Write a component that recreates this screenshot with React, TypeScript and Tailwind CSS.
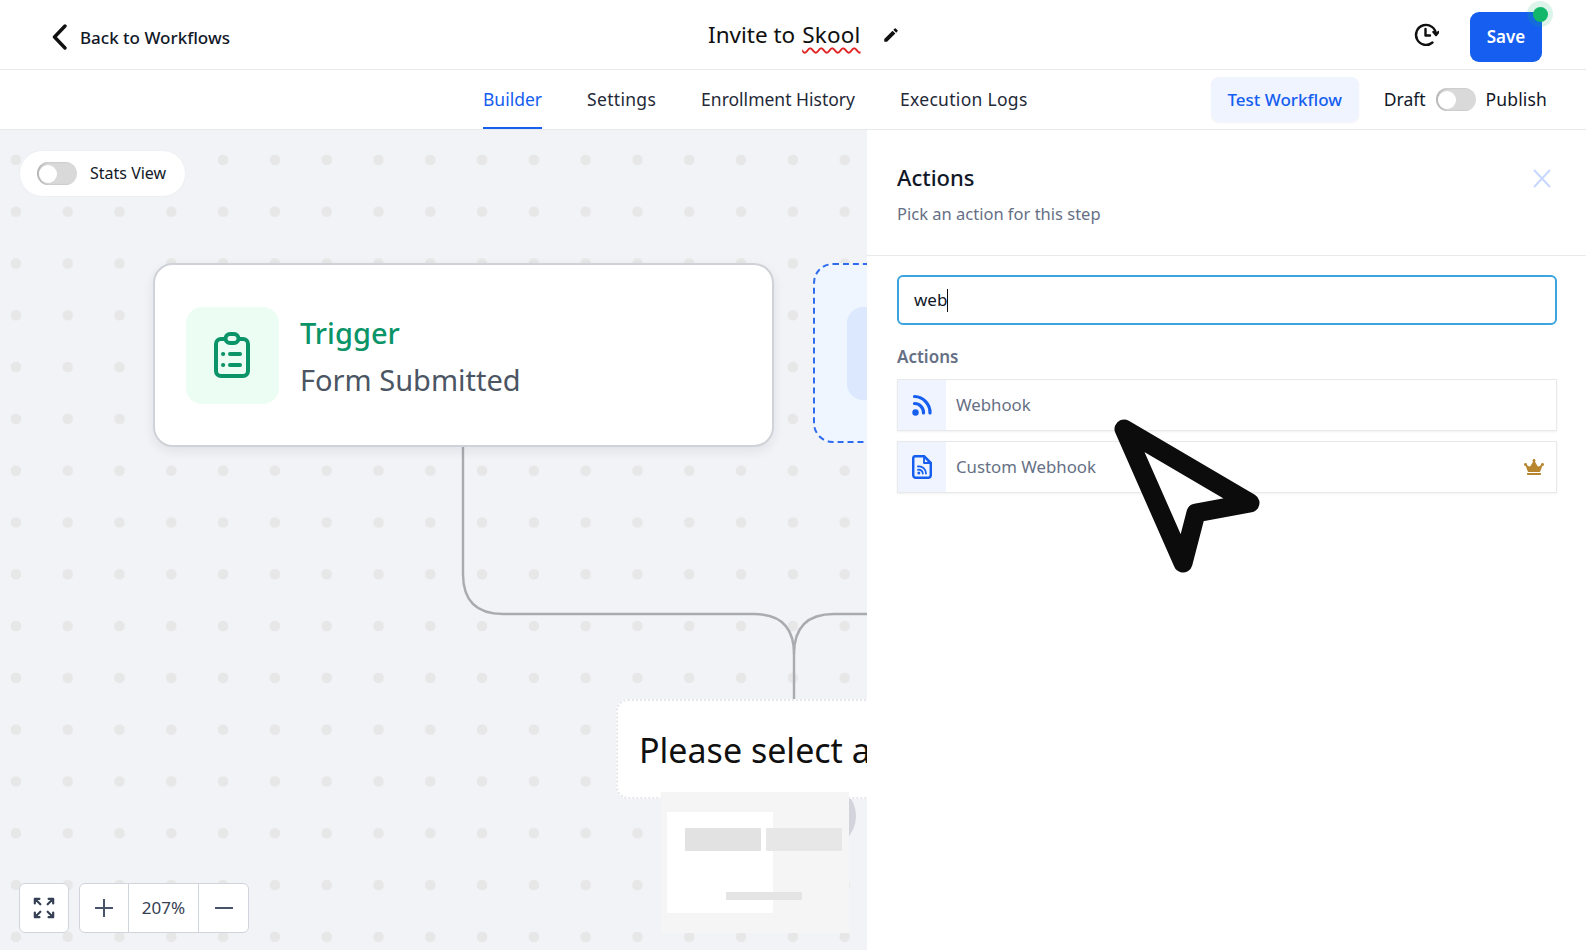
import React from "react";
import { FaCrown } from "react-icons/fa";
import { MdEdit } from "react-icons/md";

function Toggle() {
  return (
    <span className="flex h-[23px] w-10 shrink-0 items-center rounded-full bg-[#d9d9d9] pl-[2px] shadow-[inset_2px_0_2px_rgba(0,0,0,0.18)]">
      <span className="h-[18px] w-[18px] rounded-full bg-white" />
    </span>
  );
}

function Header() {
  return (
    <header className="flex h-[70px] shrink-0 items-center border-b border-[#e8e9eb] bg-white pt-[5px]">
      <div className="flex w-[708px] items-center pl-[50px] text-[#111827]">
        <svg width="20" height="26" viewBox="0 0 20 26" fill="none" stroke="#101010" strokeWidth="3.4" strokeLinecap="round" strokeLinejoin="round" className="mr-[10px]">
          <path d="M15 2 L4.5 13 L15 24" />
        </svg>
        <span className="translate-y-px text-[17px] font-medium leading-6">Back to Workflows</span>
      </div>
      <div className="flex -translate-y-[2px] items-center text-[22.5px] text-[#101010]">
        <span>Invite to </span>
        <span className="ml-[7px] tracking-[0.2px] [text-decoration:underline_wavy_#e02424_1.5px] [text-underline-offset:4px]">Skool</span>
        <MdEdit className="ml-[21px] text-[18px] text-[#101010]" />
      </div>
      <div className="relative ml-auto mr-[44px] flex items-center gap-[31px]">
        <svg width="26" height="26" viewBox="0 0 26 26" fill="none" stroke="#101010" strokeWidth="2.4" strokeLinecap="round" strokeLinejoin="round" className="-translate-y-[2px]">
          <path d="M23 12.5 A10 10 0 1 0 19.5 20.5" />
          <path d="M12.5 7 V13.5 H17" />
          <path d="M20.5 10 L23 13 L25.5 10" />
        </svg>
        <button className="h-[50px] w-[72px] rounded-[9px] bg-[#155eef] text-[17px] font-semibold text-white">Save</button>
        <span className="absolute right-[-11px] top-[-11px] flex h-[26px] w-[26px] items-center justify-center rounded-full bg-[#12b76a]/15">
          <span className="h-[15px] w-[15px] rounded-full bg-[#12b76a]" />
        </span>
      </div>
    </header>
  );
}

function Tabs() {
  return (
    <nav className="flex h-[60px] shrink-0 items-center border-b border-[#e8e9eb] bg-white pl-[483px] pr-[39px] text-[17.5px] text-[#1f2937]">
      <div className="flex h-full items-stretch gap-[45px]">
        <a className="flex items-center border-y-2 border-t-transparent border-b-[#155eef] text-[#155eef]">Builder</a>
        <a className="flex items-center tracking-[0.3px]">Settings</a>
        <a className="flex items-center">Enrollment History</a>
        <a className="flex items-center tracking-[0.3px]">Execution Logs</a>
      </div>
      <div className="ml-auto flex items-center">
        <button className="mr-[25px] h-[45px] w-[148px] rounded-[8px] bg-[#eff4ff] text-[17px] font-medium text-[#155eef] shadow-[0_1px_2px_rgba(16,24,40,0.05)]">Test Workflow</button>
        <span className="mr-[10px] text-[#111827]">Draft</span>
        <Toggle />
        <span className="ml-[10px] tracking-[0.15px] text-[#111827]">Publish</span>
      </div>
    </nav>
  );
}

function Canvas() {
  return (
    <div className="relative h-full flex-1 overflow-hidden bg-[#f2f3f7] bg-[radial-gradient(circle,#e7e7e7_5px,transparent_5.6px)] bg-[size:51.8px_51.8px] bg-[position:-10px_4px]">
      <div className="absolute left-[19px] top-5 flex h-[47px] w-[167px] items-center gap-[13px] rounded-full border border-[#eef0f3] bg-white pl-[17px] text-[16px] text-[#111827]">
        <Toggle />
        <span className="-translate-y-px">Stats View</span>
      </div>

      <svg className="absolute left-0 top-0" width="867" height="821" fill="none" stroke="#a9abb0" strokeWidth="2.4">
        <path d="M463 315 V444 Q463 484 503 484 H754 Q794 484 794 524 V570" />
        <path d="M794 524 Q794 484 834 484 H867" />
      </svg>

      <div className="absolute left-[153px] top-[133px] flex h-[184px] w-[621px] items-center rounded-[20px] border-2 border-[#d0d2d8] bg-white pl-[31px] shadow-[0_4px_12px_rgba(16,24,40,0.08)]">
        <div className="flex h-[97px] w-[93px] items-center justify-center rounded-[16px] bg-[#ecfdf3] pr-[2px]">
          <svg width="38" height="46" viewBox="0 0 38 46" fill="none" stroke="#0a9467" strokeWidth="4" strokeLinecap="round" strokeLinejoin="round">
            <rect x="3" y="7" width="32" height="37" rx="5" />
            <rect x="12.5" y="2" width="13" height="9" rx="4.5" fill="#ecfdf3" />
            <path d="M17 22 H27 M17 33 H27" />
            <path d="M10 22 H10.2 M10 33 H10.2" />
          </svg>
        </div>
        <div className="ml-[21px] pt-[4px]">
          <div className="text-[29px] font-medium leading-[44px] text-[#0a9467]">Trigger</div>
          <div className="text-[29px] leading-[49px] text-[#4b5563]">Form Submitted</div>
        </div>
      </div>

      <div className="absolute left-[813px] top-[133px] flex h-[180px] w-[120px] items-start rounded-[20px] border-2 border-dashed border-[#2f6bed] bg-[#eff6ff] pl-[32px] pt-[42px]">
        <div className="h-[93px] w-[70px] rounded-[16px] bg-[#dbe8fe]" />
      </div>

      <div className="absolute left-[792px] top-[654px] h-16 w-16 rounded-full bg-[#d1d5db]" />

      <div className="absolute left-[616px] top-[569px] flex h-[100px] w-[400px] items-center rounded-[12px] border-2 border-dotted border-[#e5e7eb] bg-white pl-[21px] pt-[3px] text-[34px] text-[#101010]">
        Please select a
      </div>

      <div className="absolute left-[661px] top-[662px] h-[141px] w-[188px] bg-[#f5f5f5]">
        <div className="ml-[6px] mt-5 h-[101px] w-[106px] bg-white" />
        <div className="absolute left-[24px] top-9 h-[23px] w-[76px] rounded-[1px] bg-[#e2e2e2]" />
        <div className="absolute left-[105px] top-9 h-[23px] w-[76px] rounded-[1px] bg-[#e7e7e7]" />
        <div className="absolute left-[65px] top-[100px] h-2 w-[76px] rounded-[1px] bg-[#e4e4e4]" />
      </div>

      <div className="absolute bottom-[17px] left-[19px] flex h-[50px] w-[50px] items-center justify-center rounded-[6px] border border-[#d0d5dd] bg-white">
        <svg width="22" height="22" viewBox="0 0 24 24" fill="none" stroke="#344054" strokeWidth="2.4" strokeLinecap="round" strokeLinejoin="round">
          <path d="M2 7 V2 H7 M2 2 L8 8" />
          <path d="M22 7 V2 H17 M22 2 L16 8" />
          <path d="M2 17 V22 H7 M2 22 L8 16" />
          <path d="M22 17 V22 H17 M22 22 L16 16" />
        </svg>
      </div>
      <div className="absolute bottom-[17px] left-[79px] flex h-[50px] w-[170px] items-center divide-x divide-[#d0d5dd] rounded-[6px] border border-[#d0d5dd] bg-white">
        <div className="flex h-full w-[49px] items-center justify-center">
          <svg width="18" height="18" viewBox="0 0 18 18" stroke="#475467" strokeWidth="2"><path d="M9 0 V18 M0 9 H18" /></svg>
        </div>
        <div className="flex h-full w-[70px] items-center justify-center text-[17px] text-[#344054]">207%</div>
        <div className="flex h-full flex-1 items-center justify-center">
          <svg width="18" height="18" viewBox="0 0 18 18" stroke="#475467" strokeWidth="2"><path d="M0 9 H18" /></svg>
        </div>
      </div>
    </div>
  );
}

function ActionRow({ icon, label, crown }: { icon: React.ReactNode; label: string; crown?: boolean }) {
  return (
    <div className="flex h-[52px] items-stretch border border-[#e8e9eb] shadow-[0_1px_2px_rgba(16,24,40,0.06)]">
      <div className="flex w-[48px] items-center justify-center bg-[#eff4ff]">{icon}</div>
      <span className="ml-[10px] flex items-center text-[16.8px] text-[#667085]">{label}</span>
      {crown && <FaCrown className="ml-auto mr-[12px] self-center text-[20px] text-[#b7862f]" />}
    </div>
  );
}

function Panel() {
  return (
    <aside className="h-full w-[719px] shrink-0 bg-white">
      <div className="relative h-[126px] border-b border-[#e8e9eb] pl-[30px] pt-[28px]">
        <h2 className="text-[22px] font-medium leading-[38px] text-[#101828]">Actions</h2>
        <p className="mt-[6px] text-[16.5px] leading-6 text-[#667085]">Pick an action for this step</p>
        <svg className="absolute right-[35px] top-[39px]" width="18" height="19" viewBox="0 0 18 19" stroke="#c7d7fe" strokeWidth="2">
          <path d="M1 1 L17 18 M17 1 L1 18" />
        </svg>
      </div>
      <div className="pl-[30px] pr-[29px] pt-[19px]">
        <div className="flex h-[50px] items-center rounded-[6px] border-2 border-[#3ba3dd] pl-[15px] text-[17px] text-[#101828]">
          web<span className="h-[23px] w-px bg-[#101010]" />
        </div>
        <div className="mt-[20px] text-[17px] font-semibold leading-6 text-[#667085]">Actions</div>
        <div className="mt-[10px] flex flex-col gap-[10px]">
          <ActionRow
            label="Webhook"
            icon={
              <svg width="20" height="22" viewBox="0 0 20 22" fill="none" stroke="#155eef" strokeWidth="3.2" strokeLinecap="round">
                <path d="M2.5 2.5 A16 16 0 0 1 18 19" />
                <path d="M2.5 9.5 A9 9 0 0 1 11.5 19" />
                <circle cx="3.5" cy="18.5" r="3.2" fill="#155eef" stroke="none" />
              </svg>
            }
          />
          <ActionRow
            label="Custom Webhook"
            crown
            icon={
              <svg width="20" height="24" viewBox="0 0 20 24" fill="none" stroke="#155eef" strokeWidth="2.5" strokeLinejoin="round" strokeLinecap="round">
                <path d="M3.5 1.2 H12 L18.8 8 V20 A2.8 2.8 0 0 1 16 22.8 H4 A2.8 2.8 0 0 1 1.2 20 V3.5 A2.3 2.3 0 0 1 3.5 1.2 Z" />
                <path d="M12 1.2 V8 H18.8" strokeWidth="1.8" />
                <path d="M6 11.5 A7 7 0 0 1 14 18.5 M6 14.8 A4 4 0 0 1 10.8 18.5" strokeWidth="1.8" />
                <circle cx="6.8" cy="18" r="1.5" fill="#155eef" stroke="none" />
              </svg>
            }
          />
        </div>
      </div>
    </aside>
  );
}

export default function App() {
  return (
    <div className="relative flex h-[950px] w-full flex-col overflow-hidden bg-white font-['Noto_Sans',sans-serif]">
      <Header />
      <Tabs />
      <main className="flex min-h-0 flex-1">
        <Canvas />
        <Panel />
      </main>
      <svg className="absolute left-[1105px] top-[410px]" width="165" height="175" viewBox="1105 410 165 175" fill="#fff" stroke="#0c0c0c" strokeWidth="19" strokeLinejoin="round">
        <path d="M1124 429 L1250 503 L1196 513 L1183 563 Z" />
      </svg>
    </div>
  );
}
